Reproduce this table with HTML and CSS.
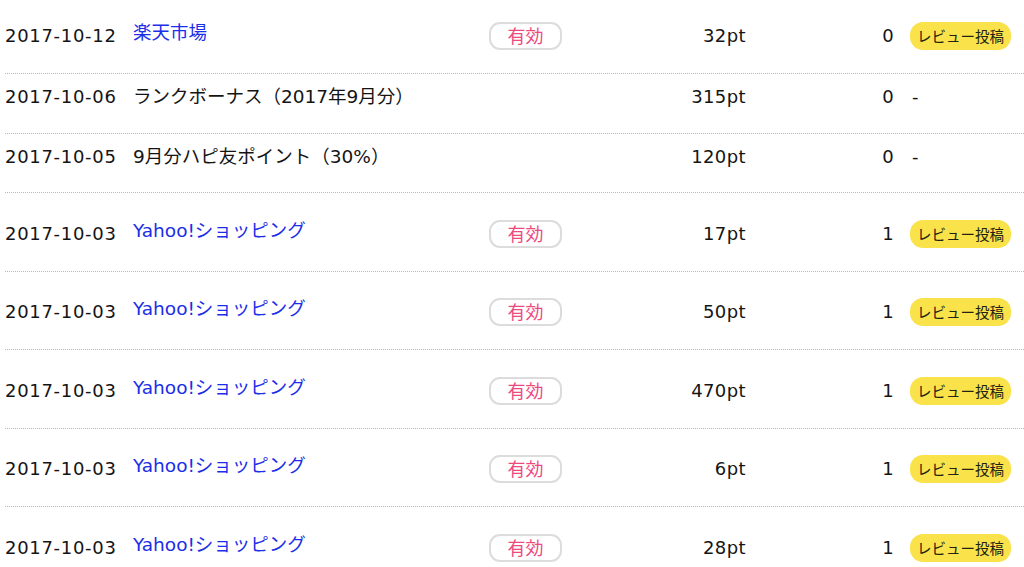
FILE: index.html
```html
<!DOCTYPE html>
<html lang="ja">
<head>
<meta charset="utf-8">
<title>ポイント履歴</title>
<link rel="stylesheet" href="styles.css">
</head>
<body>
<div class="history">
  <div class="row">
    <div class="date">2017-10-12</div>
    <div class="name"><a class="shop" href="#">楽天市場</a></div>
    <div class="status"><span class="badge">有効</span></div>
    <div class="pt">32pt</div>
    <div class="count">0</div>
    <div class="action"><span class="review">レビュー投稿</span></div>
  </div>
  <div class="row plain">
    <div class="date">2017-10-06</div>
    <div class="name">ランクボーナス（2017年9月分）</div>
    <div class="status"></div>
    <div class="pt">315pt</div>
    <div class="count">0</div>
    <div class="action"><span class="dash">-</span></div>
  </div>
  <div class="row plain">
    <div class="date">2017-10-05</div>
    <div class="name">9月分ハピ友ポイント（30%）</div>
    <div class="status"></div>
    <div class="pt">120pt</div>
    <div class="count">0</div>
    <div class="action"><span class="dash">-</span></div>
  </div>
  <div class="row">
    <div class="date">2017-10-03</div>
    <div class="name"><a class="shop" href="#">Yahoo!ショッピング</a></div>
    <div class="status"><span class="badge">有効</span></div>
    <div class="pt">17pt</div>
    <div class="count">1</div>
    <div class="action"><span class="review">レビュー投稿</span></div>
  </div>
  <div class="row">
    <div class="date">2017-10-03</div>
    <div class="name"><a class="shop" href="#">Yahoo!ショッピング</a></div>
    <div class="status"><span class="badge">有効</span></div>
    <div class="pt">50pt</div>
    <div class="count">1</div>
    <div class="action"><span class="review">レビュー投稿</span></div>
  </div>
  <div class="row">
    <div class="date">2017-10-03</div>
    <div class="name"><a class="shop" href="#">Yahoo!ショッピング</a></div>
    <div class="status"><span class="badge">有効</span></div>
    <div class="pt">470pt</div>
    <div class="count">1</div>
    <div class="action"><span class="review">レビュー投稿</span></div>
  </div>
  <div class="row">
    <div class="date">2017-10-03</div>
    <div class="name"><a class="shop" href="#">Yahoo!ショッピング</a></div>
    <div class="status"><span class="badge">有効</span></div>
    <div class="pt">6pt</div>
    <div class="count">1</div>
    <div class="action"><span class="review">レビュー投稿</span></div>
  </div>
  <div class="row">
    <div class="date">2017-10-03</div>
    <div class="name"><a class="shop" href="#">Yahoo!ショッピング</a></div>
    <div class="status"><span class="badge">有効</span></div>
    <div class="pt">28pt</div>
    <div class="count">1</div>
    <div class="action"><span class="review">レビュー投稿</span></div>
  </div>
</div>
</body>
</html>
```

FILE: styles.css
```css
html, body {
  margin: 0;
  padding: 0;
  background: #ffffff;
}

body {
  font-family: "DejaVu Sans", "Noto Sans CJK JP", sans-serif;
  font-size: 18px;
  color: #141414;
  overflow: hidden;
}

.history {
  margin-top: -4.5px;
  padding-left: 5px;
}

.row {
  box-sizing: border-box;
  height: 78.5px;
  padding-top: 4px;
  display: grid;
  grid-template-columns: 128px 356px 73px 184px 148px 1fr;
  align-items: center;
  border-bottom: 1px dotted #b8b8b8;
  line-height: 24px;
}

.row.plain {
  height: 59.5px;
  padding-top: 0;
  padding-bottom: 12px;
}

.date {
  letter-spacing: 0.7px;
}

.name {
  white-space: nowrap;
  font-size: 18.5px;
}

.shop {
  color: #1b2ee8;
  text-decoration: none;
  display: inline-block;
  padding-bottom: 6px;
}

.status {
  display: flex;
}

.badge {
  box-sizing: border-box;
  width: 73px;
  height: 28px;
  border: 2px solid #dcdcdc;
  border-radius: 11px;
  color: #ec4a80;
  font-family: "Noto Sans CJK JP", sans-serif;
  font-size: 18px;
  line-height: 23px;
  text-align: center;
}

.pt,
.count {
  text-align: right;
  letter-spacing: 0.4px;
}

.action {
  padding-left: 16px;
  display: flex;
  align-items: center;
}

.review {
  box-sizing: border-box;
  width: 101px;
  height: 28px;
  border-radius: 13px;
  background: #fae24a;
  color: #222214;
  font-family: "Noto Sans CJK JP", sans-serif;
  font-size: 14.5px;
  line-height: 28px;
  text-align: center;
}

.dash {
  padding-left: 2px;
}
```
